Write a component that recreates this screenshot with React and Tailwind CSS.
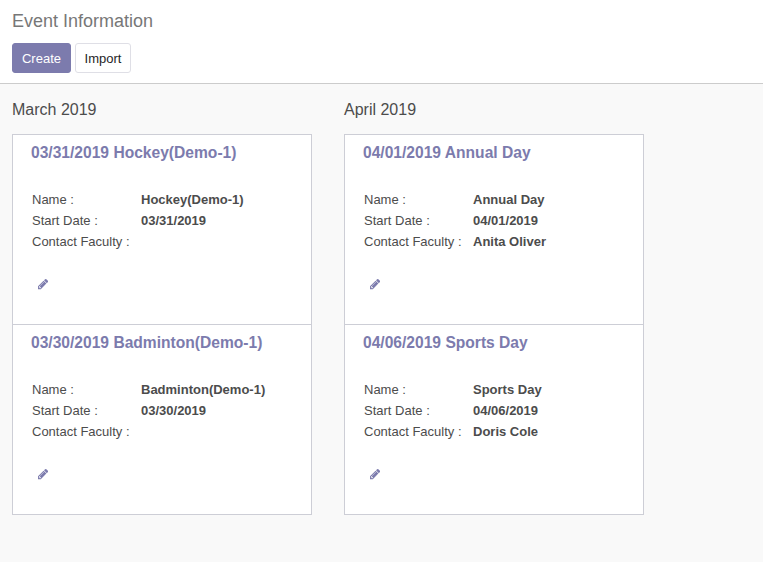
const columns = [
  {
    title: "March 2019",
    cards: [
      { date: "03/31/2019", name: "Hockey(Demo-1)", faculty: "" },
      { date: "03/30/2019", name: "Badminton(Demo-1)", faculty: "" },
    ],
  },
  {
    title: "April 2019",
    cards: [
      { date: "04/01/2019", name: "Annual Day", faculty: "Anita Oliver" },
      { date: "04/06/2019", name: "Sports Day", faculty: "Doris Cole" },
    ],
  },
];

function Pencil() {
  return (
    <svg className="block h-[12px] w-[10.3px]" viewBox="0 0 1536 1792" fill="currentColor">
      <path d="M363 1536l91-91-235-235-91 91v107h128v128h107zM886 608q0-22-22-22-10 0-17 7l-542 542q-7 7-7 17 0 22 22 22 10 0 17-7l542-542q7-7 7-17zM832 416l416 416-832 832H0v-416zM1515 512q0 53-37 90l-166 166-416-416 166-165q36-38 90-38 53 0 91 38l235 234q37 39 37 91z" />
    </svg>
  );
}

function Row({ label, value }) {
  return (
    <div className="flex h-[21px] items-center">
      <span className="w-[109px] whitespace-nowrap">{label}</span>
      <span className="font-bold">{value}</span>
    </div>
  );
}

function Card({ date, name, faculty }) {
  return (
    <div className="-mt-px h-[191px] border border-[#cdced6] bg-white pl-[18px] text-[#4c4c4c]">
      <h3 className="pt-[6px] text-[15.6px] leading-6 font-bold whitespace-nowrap text-[#7c7bad]">
        {date} {name}
      </h3>
      <div className="mt-[24px] pl-px text-[13px]">
        <Row label="Name :" value={name} />
        <Row label="Start Date :" value={date} />
        <Row label="Contact Faculty :" value={faculty} />
      </div>
      <button className="mt-[26px] ml-[7px] block text-[#7c7bad]" aria-label="Edit">
        <Pencil />
      </button>
    </div>
  );
}

export default function App() {
  return (
    <div className="flex h-[562px] w-[763px] flex-col overflow-hidden bg-[#f9f9f9] font-['Liberation_Sans',Arial,sans-serif] text-[13px]">
      <header className="h-[84px] border-b border-[#cccccc] bg-white px-3 pt-[8px]">
        <h1 className="text-[18px] leading-[26px] text-[#777777]">Event Information</h1>
        <div className="mt-[9px] flex gap-1">
          <button className="h-[30px] w-[59px] rounded-[3px] border border-[#7c7bad] bg-[#7c7bad] pt-[2px] text-white">Create</button>
          <button className="h-[30px] w-[56px] rounded-[3px] border border-[#dfdfe6] bg-white pt-[2px] text-[#1f1f1f]">Import</button>
        </div>
      </header>
      <main className="flex gap-8 px-3">
        {columns.map((c) => (
          <section key={c.title} className="w-[300px]">
            <h2 className="h-[51px] pt-[14px] text-[16px] leading-6 text-[#4c4c4c]">{c.title}</h2>
            {c.cards.map((k) => (
              <Card key={k.date} {...k} />
            ))}
          </section>
        ))}
      </main>
    </div>
  );
}
